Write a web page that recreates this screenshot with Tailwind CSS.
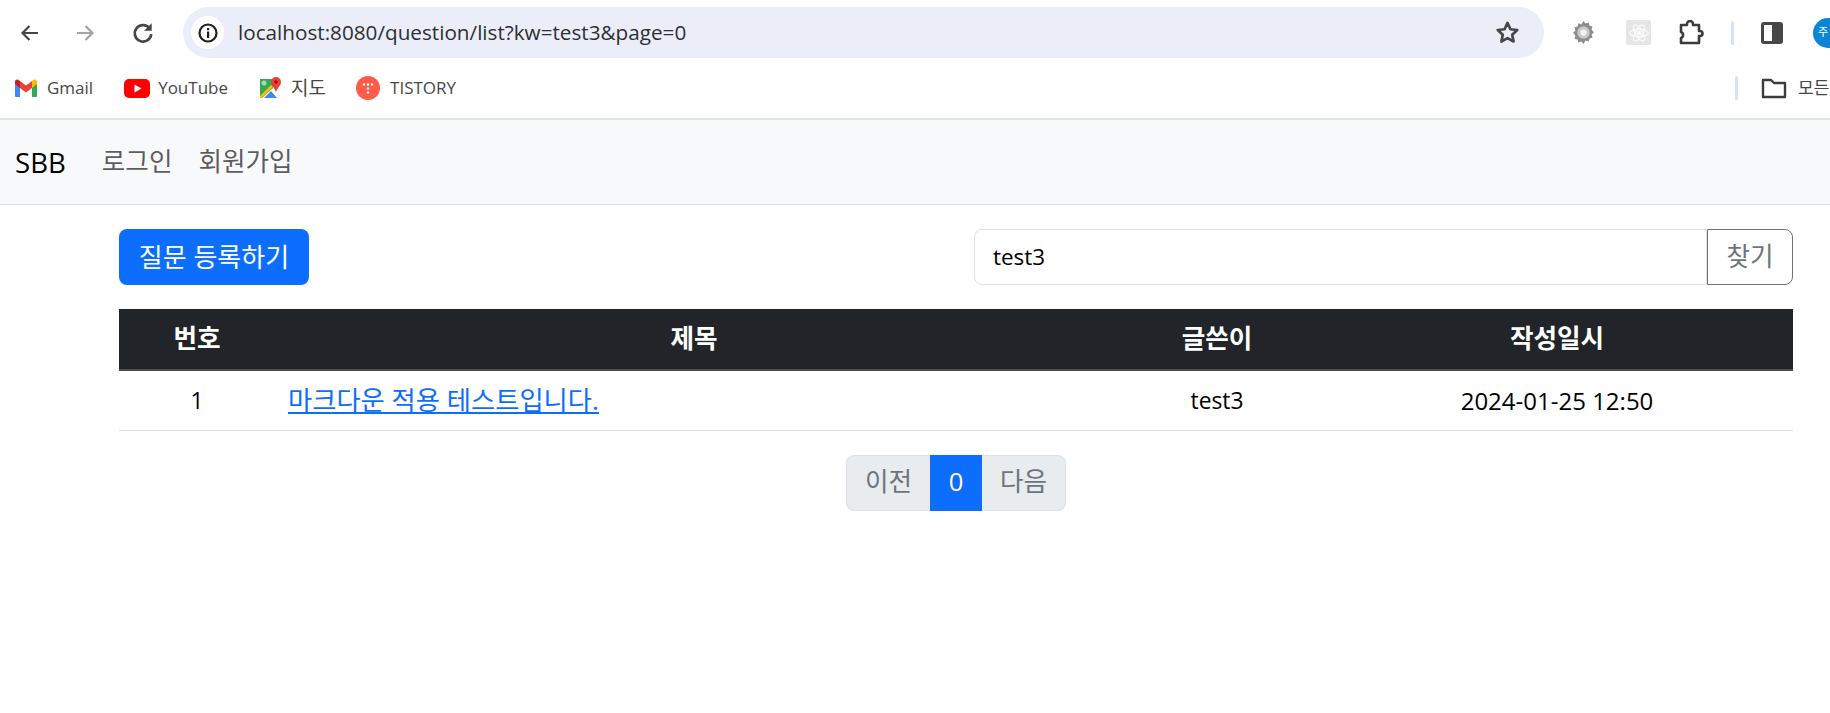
<!DOCTYPE html>
<html lang="ko">
<head>
  <meta charset="UTF-8" />
  <title>SBB</title>
  <script src="https://cdn.jsdelivr.net/npm/@tailwindcss/browser@4"></script>
</head>
<body class="bg-white h-[713px] overflow-hidden text-[25.6px] text-[#212529] font-['Open_Sans','Noto_Sans_CJK_KR',sans-serif]">

  <!-- Browser toolbar -->
  <div class="h-[65px] flex items-center">
    <div class="w-[183px] shrink-0 flex items-center h-full">
      <svg class="ml-[18px] w-[24px] h-[24px]" viewBox="0 0 24 24" fill="none" stroke="#474747" stroke-width="2.2"><path d="M20 12H5M11.5 5L4.5 12l7 7"/></svg>
      <svg class="ml-[31px] w-[24px] h-[24px]" viewBox="0 0 24 24" fill="none" stroke="#a3a3a3" stroke-width="2.2"><path d="M4 12h15M12.5 5l7 7-7 7"/></svg>
      <svg class="ml-[33px] w-[26px] h-[26px]" viewBox="0 0 24 24" fill="none" stroke="#474747" stroke-width="2.4"><path d="M18.6 8.5A7.6 7.6 0 1 0 19.6 13"/><path d="M20 3v7h-7" fill="#474747" stroke="none"/></svg>
    </div>
    <div class="w-[1361px] h-[51px] rounded-full bg-[#ebeef8] flex items-center pl-[8px] pr-[23px] shrink-0">
      <div class="w-[33px] h-[33px] rounded-full bg-white flex items-center justify-center shrink-0">
        <svg class="w-[22px] h-[22px]" viewBox="0 0 22 22" fill="none"><circle cx="11" cy="11" r="8.5" stroke="#1f1f1f" stroke-width="2.2"/><rect x="10" y="9.5" width="2.2" height="6.5" fill="#1f1f1f"/><rect x="10" y="6" width="2.2" height="2.2" fill="#1f1f1f"/></svg>
      </div>
      <span class="ml-[14px] text-[#2d2f33] text-[20.7px] font-['Open_Sans',sans-serif]">localhost:8080/question/list?kw=test3&amp;page=0</span>
      <svg class="ml-auto w-[27px] h-[27px]" viewBox="0 0 24 24" fill="none" stroke="#474747" stroke-width="2.4" stroke-linejoin="round"><path d="M12 3.5l2.6 5.6 6.1.7-4.5 4.2 1.200 6-5.400-3-5.400 3 1.200-6-4.500-4.200 6.100-.7z"/></svg>
    </div>
    <div class="flex-1 flex items-center h-full overflow-hidden">
      <svg class="ml-[27px] w-[25px] h-[25px] shrink-0" viewBox="0 0 24 24"><path fill="#8d8d8d" d="M12 1l2 2.4 3-1 .7 3 3 .8-1 3L22 12l-2.300 2 1 3-3 .7-.7 3-3-1L12 23l-2-2.300-3 1-.7-3-3-.7 1-3L2 12l2.300-2-1-3 3-.8.7-3 3 1z"/><circle cx="12" cy="12" r="6" fill="#c9c9c9"/><circle cx="12" cy="12" r="3" fill="#f2f2f2"/></svg>
      <div class="ml-[30px] w-[25px] h-[25px] shrink-0 bg-[#e6e6e6] rounded-[2px] flex items-center justify-center">
        <svg class="w-[22px] h-[22px]" viewBox="0 0 24 24" fill="none" stroke="#fafafa" stroke-width="1.300"><ellipse cx="12" cy="12" rx="10" ry="4"/><ellipse cx="12" cy="12" rx="10" ry="4" transform="rotate(60 12 12)"/><ellipse cx="12" cy="12" rx="10" ry="4" transform="rotate(120 12 12)"/><circle cx="12" cy="12" r="2" fill="#fafafa"/></svg>
      </div>
      <svg class="ml-[27px] w-[26px] h-[26px] shrink-0" viewBox="0 0 26 26" fill="none" stroke="#3c3c3c" stroke-width="2.600" stroke-linejoin="round"><path d="M3 5h6V4a3 3 0 0 1 6 0v1h6v6h1a2.500 2.500 0 0 1 0 5h-1v7H3v-5a3 3 0 0 0 2-3 3 3 0 0 0-2-3z"/></svg>
      <div class="ml-[27px] w-[3px] h-[24px] rounded-sm bg-[#d3e3fd] shrink-0"></div>
      <div class="ml-[27px] w-[22px] h-[22px] shrink-0 rounded-[3px] border-[3px] border-[#474747] flex justify-end"><div class="w-[8px] h-full bg-[#474747]"></div></div>
      <div class="ml-[30px] w-[30px] h-[30px] rounded-full bg-[#0b85d6] text-white text-[11px] flex items-center pl-[5px] shrink-0">주</div>
    </div>
  </div>

  <!-- Bookmarks bar -->
  <div class="h-[55px] flex items-center text-[17px] text-[#474747] border-b-2 border-[#dfe3e2] pb-[7px]">
    <svg class="ml-[14px] w-[24px] h-[20px] shrink-0" viewBox="0 0 24 20"><path fill="#4285f4" d="M1 5v13a1 1 0 0 0 1 1h4V9z"/><path fill="#34a853" d="M18 9v10h4a1 1 0 0 0 1-1V5z"/><path fill="#ea4335" d="M6 3v7l6 4.500 6-4.500V3l-6 4.500z"/><path fill="#c5221f" d="M1 3.500V6l5 4V3L4.500 2C3 1 1 2 1 3.500z"/><path fill="#fbbc04" d="M23 3.500V6l-5 4V3l1.500-1C21 1 23 2 23 3.500z"/></svg>
    <span class="ml-[9px]">Gmail</span>
    <svg class="ml-[31px] w-[26px] h-[19px] shrink-0" viewBox="0 0 26 19"><rect width="26" height="19" rx="5" fill="#f00"/><path d="M10.500 5.500v8l7-4z" fill="#fff"/></svg>
    <span class="ml-[8px]">YouTube</span>
    <svg class="ml-[31px] w-[23px] h-[24px] shrink-0" viewBox="0 0 23 24"><path fill="#34a853" d="M1 3h13v9L3 22H1z"/><path fill="#fbbc04" d="M1 20L12 9l2 2L3 22H1z"/><path fill="#4285f4" d="M5 22l7-7 6 7z"/><circle cx="5" cy="7" r="2.500" fill="#a7d7b4"/><path fill="#ea4335" d="M17 1a5 5 0 0 1 5 5c0 3.500-3.500 5.500-5 10-1.500-4.500-5-6.500-5-10a5 5 0 0 1 5-5z"/><circle cx="17" cy="6" r="1.700" fill="#a50e0e"/></svg>
    <span class="ml-[9px] text-[19px]">지도</span>
    <div class="ml-[30px] w-[24px] h-[24px] rounded-full bg-[#ff5a4a] flex items-center justify-center shrink-0">
      <svg class="w-[12px] h-[12px]" viewBox="0 0 12 12" fill="#fff"><circle cx="2" cy="2.500" r="1.200"/><circle cx="6" cy="2.500" r="1.200"/><circle cx="10" cy="2.500" r="1.200"/><circle cx="6" cy="6.500" r="1.200"/><circle cx="6" cy="10.500" r="1.200"/></svg>
    </div>
    <span class="ml-[10px]">TISTORY</span>
    <div class="ml-auto w-[3px] h-[24px] rounded-sm bg-[#d3e3fd] shrink-0"></div>
    <svg class="ml-[23px] w-[26px] h-[22px] shrink-0" viewBox="0 0 26 22" fill="none" stroke="#3c3c3c" stroke-width="2.400" stroke-linejoin="round"><path d="M2 3h8l3 3h11v14H2z"/></svg>
    <span class="ml-[11px] w-[32px] overflow-hidden whitespace-nowrap shrink-0">모든 북마크</span>
  </div>

  <!-- Navbar -->
  <nav class="h-[85px] bg-[#f8f9fa] border-b border-[#dee2e6] flex items-center pl-[15px] pt-[1px]">
    <a class="text-[27.6px] text-black">SBB</a>
    <a class="ml-[36px] text-[#000000a6]">로그인</a>
    <a class="ml-[26px] text-[#000000a6]">회원가입</a>
  </nav>

  <!-- Content -->
  <div class="ml-[119px] w-[1674px] pt-[24px]">
    <div class="flex justify-between">
      <a class="h-[56px] w-[190px] rounded-[8px] bg-[#0d6efd] text-white flex items-center justify-center text-[26px]">질문 등록하기</a>
      <div class="flex w-[819px] h-[56px]">
        <input class="flex-1 min-w-0 border border-[#dee2e6] rounded-l-[8px] px-[18px] text-[22.4px] text-black outline-none" type="text" value="test3" />
        <button class="w-[86px] border border-[#6c757d] rounded-r-[8px] text-[#6c757d]">찾기</button>
      </div>
    </div>

    <table class="w-full mt-[24px] table-fixed text-center border-collapse">
      <thead>
        <tr class="h-[61px] bg-[#212529] text-white font-bold border-b-2 border-[#4a4d52]">
          <th class="w-[156px]">번호</th>
          <th class="w-[838px]">제목</th>
          <th class="w-[208px]">글쓴이</th>
          <th>작성일시</th>
        </tr>
      </thead>
      <tbody>
        <tr class="h-[60px] border-b border-[#dee2e6] text-black">
          <td class="text-[22.8px] pt-[2px]">1</td>
          <td class="text-left pl-[13px] text-[26.3px]"><a class="text-[#0d6efd] underline">마크다운 적용 테스트입니다.</a></td>
          <td class="text-[22.8px] pt-[2px]">test3</td>
          <td class="text-[24px] pt-[2px]">2024-01-25 12:50</td>
        </tr>
      </tbody>
    </table>

    <ul class="flex justify-center mt-[24px] h-[56px]">
      <li class="w-[84px] flex items-center justify-center bg-[#e9ecef] border border-[#dee2e6] border-r-0 rounded-l-[8px] text-[#6c757d]">이전</li>
      <li class="w-[52px] flex items-center justify-center bg-[#0d6efd] text-white">0</li>
      <li class="w-[84px] flex items-center justify-center bg-[#e9ecef] border border-[#dee2e6] border-l-0 rounded-r-[8px] text-[#6c757d]">다음</li>
    </ul>
  </div>
</body>
</html>
